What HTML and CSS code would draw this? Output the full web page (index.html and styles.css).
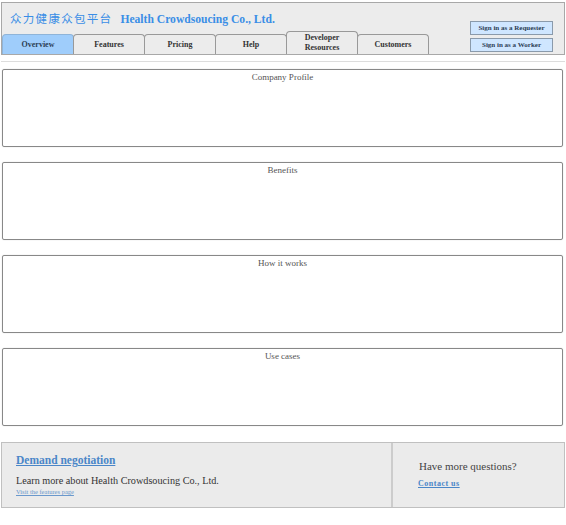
FILE: index.html
```html
<!DOCTYPE html>
<html>
  <head>
    <meta name="viewport" content="width=device-width, initial-scale=1" />
    <title>Health Crowdsoucing Co., Ltd.</title>
    <link rel="stylesheet" href="styles.css">
  </head>
  <body>
    <div class="topbar">
      <div class="topbar-left">
        <div class="brand">
          <span class="brand-cn">众力健康众包平台</span>
          <span class="brand-en">Health Crowdsoucing Co., Ltd.</span>
        </div>
        <div class="tabs">
          <a class="tab active" href="#">Overview</a>
          <a class="tab" href="#">Features</a>
          <a class="tab" href="#">Pricing</a>
          <a class="tab" href="#">Help</a>
          <a class="tab tall" href="#">Developer<br />Resources</a>
          <a class="tab" href="#">Customers</a>
        </div>
      </div>
      <div class="signin">
        <button class="signin-button">Sign in as a Requester</button>
        <button class="signin-button">Sign in as a Worker</button>
      </div>
    </div>

    <hr class="divider" />

    <div class="panel">Company Profile</div>
    <div class="panel">Benefits</div>
    <div class="panel">How it works</div>
    <div class="panel">Use cases</div>

    <div class="footer">
      <div class="footer-main">
        <a class="footer-title" href="#">Demand negotiation</a>
        <p class="footer-text">Learn more about Health Crowdsoucing Co., Ltd.</p>
        <a class="footer-small" href="#">Visit the features page</a>
      </div>
      <div class="footer-side">
        <p class="footer-question">Have more questions?</p>
        <a class="footer-contact" href="#">Contact us</a>
      </div>
    </div>
  </body>
</html>
```

FILE: styles.css
```css
body {
  margin: 0;
  padding: 2px 1px 0 1px;
  background-color: white;
  color: #444;
  font-family: "Liberation Serif", "Noto Sans CJK SC", serif;
}
.topbar {
  display: flex;
  justify-content: space-between;
  height: 51px;
  background-color: #ececec;
  border: 1px solid #a8a8a8;
}
.topbar-left {
  display: flex;
  flex-direction: column;
  justify-content: space-between;
}
.brand {
  padding: 6px 0 0 8px;
  color: #3a8ee6;
  white-space: nowrap;
}
.brand-cn {
  font-family: "Noto Sans CJK SC", sans-serif;
  font-size: 11.5px;
  letter-spacing: 1.3px;
}
.brand-en {
  font-weight: bold;
  font-size: 11.6px;
  margin-left: 4px;
}
.tabs {
  display: flex;
  align-items: flex-end;
}
.tab {
  box-sizing: border-box;
  width: 72px;
  height: 20px;
  margin-right: -1px;
  display: flex;
  align-items: center;
  justify-content: center;
  text-align: center;
  line-height: 10px;
  font-size: 8px;
  font-weight: bold;
  color: #333;
  text-decoration: none;
  background-color: #ececec;
  border: 1px solid #999;
  border-bottom: none;
  border-radius: 4px 4px 0 0;
}
.tab.active {
  background-color: #9fcdfb;
  color: #2c3d55;
  border-color: #8fb4d8;
}
.tab.tall {
  height: 23px;
}
.signin {
  display: flex;
  flex-direction: column;
  gap: 3px;
  padding: 18px 11px 0 0;
}
.signin-button {
  width: 83px;
  height: 14px;
  padding: 0;
  font-family: "Liberation Serif", serif;
  font-size: 7px;
  font-weight: bold;
  color: #2c3d55;
  background-color: #cfe6ff;
  border: 1px solid #8a9aab;
}
.divider {
  border: none;
  border-top: 1px solid #ddd;
  margin: 6px 0 7px 0;
}
.panel {
  box-sizing: border-box;
  height: 78px;
  margin: 0 2px 15px 1px;
  padding-top: 2px;
  text-align: center;
  font-size: 9px;
  color: #555;
  border: 1px solid #888;
  border-radius: 2px;
  box-shadow: 0 0 1px #bbb;
}
.footer {
  display: flex;
  height: 64px;
  margin-top: 16px;
  background-color: #ebebeb;
  border: 1px solid #c0c0c0;
}
.footer-main {
  width: 375px;
  padding: 11px 0 0 14px;
  border-right: 2px solid #ccc;
}
.footer-title {
  display: block;
  font-size: 11.5px;
  font-weight: bold;
  color: #4a86c8;
}
.footer-text {
  margin: 9px 0 0 0;
  font-size: 10.2px;
  color: #333;
}
.footer-small {
  display: block;
  margin-top: 2px;
  font-size: 6.5px;
  color: #6a98cc;
}
.footer-side {
  padding: 17px 0 0 25px;
}
.footer-question {
  margin: 0 0 0 1px;
  font-size: 11px;
  color: #444;
}
.footer-contact {
  display: block;
  margin-top: 7px;
  font-size: 8px;
  font-weight: bold;
  letter-spacing: 0.5px;
  color: #4a86c8;
}
```
